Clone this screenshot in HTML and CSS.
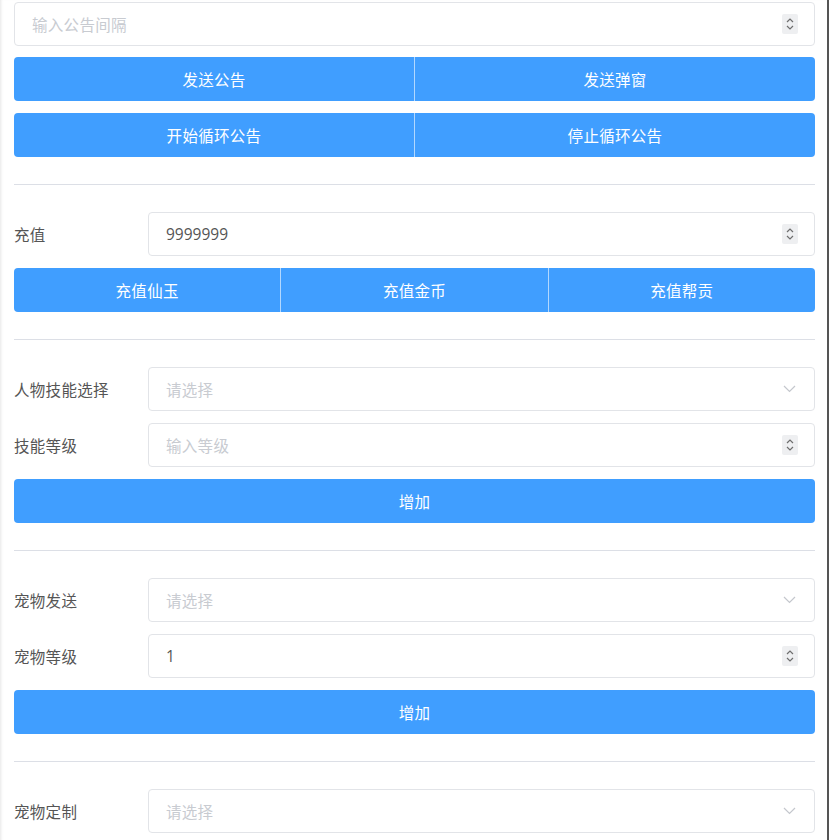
FILE: index.html
```html
<!DOCTYPE html>
<html lang="zh-CN">
<head>
<meta charset="utf-8">
<title>管理</title>
<link rel="stylesheet" href="styles.css">
</head>
<body>
<div class="page">
  <div class="row first">
    <div class="field">
      <span class="placeholder">输入公告间隔</span>
      <span class="spin"><svg width="16" height="20" viewBox="0 0 16 20"><path d="M5 8 L8 5 L11 8" /><path d="M5 12 L8 15 L11 12" /></svg></span>
    </div>
  </div>
  <div class="row btn-group">
    <button class="btn">发送公告</button>
    <button class="btn">发送弹窗</button>
  </div>
  <div class="row btn-group">
    <button class="btn">开始循环公告</button>
    <button class="btn">停止循环公告</button>
  </div>

  <div class="divider"></div>

  <div class="row labeled">
    <label class="label">充值</label>
    <div class="field">
      <span class="value">9999999</span>
      <span class="spin"><svg width="16" height="20" viewBox="0 0 16 20"><path d="M5 8 L8 5 L11 8" /><path d="M5 12 L8 15 L11 12" /></svg></span>
    </div>
  </div>
  <div class="row btn-group">
    <button class="btn">充值仙玉</button>
    <button class="btn">充值金币</button>
    <button class="btn">充值帮贡</button>
  </div>

  <div class="divider"></div>

  <div class="row labeled">
    <label class="label">人物技能选择</label>
    <div class="field">
      <span class="placeholder">请选择</span>
      <svg class="arrow" width="13" height="8" viewBox="0 0 13 8"><path d="M1 1 L6.5 6.5 L12 1" /></svg>
    </div>
  </div>
  <div class="row labeled">
    <label class="label">技能等级</label>
    <div class="field">
      <span class="placeholder">输入等级</span>
      <span class="spin"><svg width="16" height="20" viewBox="0 0 16 20"><path d="M5 8 L8 5 L11 8" /><path d="M5 12 L8 15 L11 12" /></svg></span>
    </div>
  </div>
  <div class="row btn-group">
    <button class="btn">增加</button>
  </div>

  <div class="divider"></div>

  <div class="row labeled">
    <label class="label">宠物发送</label>
    <div class="field">
      <span class="placeholder">请选择</span>
      <svg class="arrow" width="13" height="8" viewBox="0 0 13 8"><path d="M1 1 L6.5 6.5 L12 1" /></svg>
    </div>
  </div>
  <div class="row labeled">
    <label class="label">宠物等级</label>
    <div class="field">
      <span class="value">1</span>
      <span class="spin"><svg width="16" height="20" viewBox="0 0 16 20"><path d="M5 8 L8 5 L11 8" /><path d="M5 12 L8 15 L11 12" /></svg></span>
    </div>
  </div>
  <div class="row btn-group">
    <button class="btn">增加</button>
  </div>

  <div class="divider"></div>

  <div class="row labeled">
    <label class="label">宠物定制</label>
    <div class="field">
      <span class="placeholder">请选择</span>
      <svg class="arrow" width="13" height="8" viewBox="0 0 13 8"><path d="M1 1 L6.5 6.5 L12 1" /></svg>
    </div>
  </div>
</div>
</body>
</html>
```

FILE: styles.css
```css
html, body {
  margin: 0;
  padding: 0;
  background: #ffffff;
}

body {
  font-family: "Open Sans", "Noto Sans CJK SC", sans-serif;
  font-size: 15px;
  color: #606266;
}

.page {
  box-sizing: border-box;
  width: 829px;
  padding: 2px 12px 20px 14px;
  border-right: 2px solid #555555;
  box-shadow: inset 3px 0 3px -2px #e6e6e6;
  min-height: 900px;
}

.row {
  display: flex;
  margin-bottom: 12px;
}

.row.first {
  margin-bottom: 11px;
}

.labeled .label {
  width: 134px;
  flex: none;
  display: flex;
  align-items: center;
  font-family: "Noto Sans CJK SC", sans-serif;
  font-size: 15.5px;
  color: #555555;
  letter-spacing: 0.3px;
}

.field {
  flex: 1;
  height: 42px;
  border: 1px solid #e2e4e8;
  border-radius: 4px;
  display: flex;
  align-items: center;
  padding: 0 16px 0 17px;
  background: #fff;
}

.placeholder {
  flex: 1;
  font-family: "Noto Sans CJK SC", sans-serif;
  color: #c8cbd1;
  font-size: 15.5px;
  letter-spacing: 0.3px;
}

.value {
  flex: 1;
  color: #555555;
  font-size: 15.5px;
}

.spin {
  width: 16px;
  height: 20px;
  background: #eeeff1;
  border-radius: 2px;
  display: flex;
}

.spin path {
  fill: none;
  stroke: #6e6e6e;
  stroke-width: 1.2;
}

.arrow {
  margin-right: 2px;
}

.arrow path {
  fill: none;
  stroke: #c4c7cd;
  stroke-width: 1.2;
}

.btn-group .btn {
  flex: 1;
  height: 44px;
  border: none;
  background: #409eff;
  color: #ffffff;
  font-family: "Noto Sans CJK SC", sans-serif;
  font-size: 15.5px;
  letter-spacing: 0.3px;
  padding: 0;
  border-left: 1px solid rgba(255, 255, 255, 0.6);
  border-radius: 0;
  cursor: pointer;
}

.btn-group .btn:first-child {
  border-left: none;
  border-top-left-radius: 4px;
  border-bottom-left-radius: 4px;
}

.btn-group .btn:last-child {
  border-top-right-radius: 4px;
  border-bottom-right-radius: 4px;
}

.divider {
  height: 1px;
  background: #dcdfe6;
  margin: 27px 0 27px;
}
```
